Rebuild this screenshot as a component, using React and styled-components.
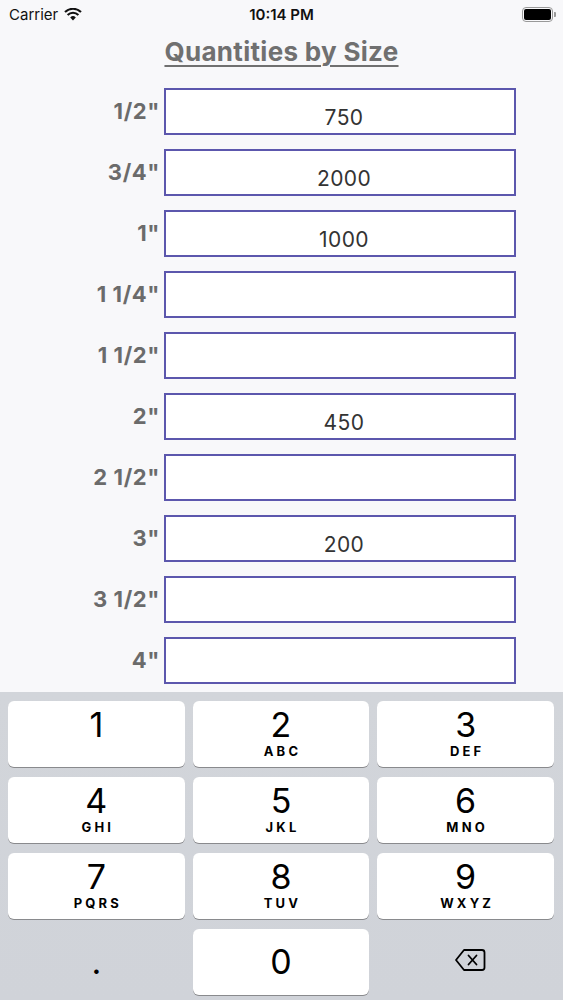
import React from "react";
import styled, { createGlobalStyle } from "styled-components";

const GlobalStyle = createGlobalStyle`
  html, body {
    margin: 0;
    padding: 0;
    background: #f8f8fa;
  }
  body {
    font-family: "Liberation Sans", Arial, sans-serif;
  }
`;

const Screen = styled.div`
  width: 563px;
  height: 1000px;
  display: flex;
  flex-direction: column;
  background: #f8f8fa;
  overflow: hidden;
`;

const StatusBar = styled.div`
  height: 28px;
  display: flex;
  align-items: center;
  justify-content: space-between;
  padding: 0 10px 0 9px;
  font-family: "Inter", "Liberation Sans", sans-serif;
  font-size: 15px;
  color: #111;
  position: relative;
`;

const Carrier = styled.div`
  display: flex;
  align-items: center;
  gap: 6px;
`;

const Clock = styled.div`
  position: absolute;
  left: 0;
  right: 0;
  text-align: center;
  font-weight: 600;
  pointer-events: none;
`;

const Battery = styled.div`
  width: 27px;
  height: 11px;
  border: 1px solid #999;
  border-radius: 4px;
  padding: 1px;
  position: relative;
  margin-top: 1px;

  &::before {
    content: "";
    display: block;
    height: 100%;
    background: #000;
    border-radius: 2px;
  }

  &::after {
    content: "";
    position: absolute;
    right: -4px;
    top: 4px;
    width: 2px;
    height: 5px;
    background: #999;
    border-radius: 0 1px 1px 0;
  }
`;

const Title = styled.h1`
  margin: 8px 0 0;
  height: 36px;
  text-align: center;
  font-family: "Inter", "Liberation Sans", sans-serif;
  font-size: 26px;
  font-weight: 700;
  letter-spacing: 0.3px;
  color: #707070;
  text-decoration: underline;
  text-underline-offset: 4px;
  text-decoration-thickness: 2px;
`;

const Form = styled.div`
  margin-top: 16px;
  display: flex;
  flex-direction: column;
  gap: 14px;
  flex: 1;
`;

const Row = styled.div`
  display: grid;
  grid-template-columns: 160px 352px;
  column-gap: 4px;
  height: 47px;
`;

const SizeLabel = styled.div`
  text-align: right;
  font-family: "Inter", "Liberation Sans", sans-serif;
  font-size: 22px;
  font-weight: 700;
  letter-spacing: 0.6px;
  color: #6b6b6b;
  padding-top: 10px;
`;

const QtyBox = styled.div`
  box-sizing: border-box;
  border: 2px solid #5c57ad;
  background: #fff;
  display: flex;
  align-items: center;
  justify-content: center;
  padding: 12px 0 0 8px;
  font-family: "Inter", "Liberation Sans", sans-serif;
  font-size: 21px;
  letter-spacing: 0.4px;
  color: #333;
`;

const Keyboard = styled.div`
  height: 308px;
  background: linear-gradient(#d2d5da, #d0d3d9);
  box-sizing: border-box;
  padding: 9px 9px 0 8px;
  display: grid;
  grid-template-columns: repeat(3, 1fr);
  grid-auto-rows: 66px;
  column-gap: 8px;
  row-gap: 10px;
`;

const Key = styled.div`
  background: ${(p) => (p.$blank ? "transparent" : "#fff")};
  border-radius: 6px;
  box-shadow: ${(p) => (p.$blank ? "none" : "0 1px 0 #898a8d")};
  display: flex;
  flex-direction: column;
  align-items: center;
  justify-content: ${(p) => (p.$letters ? "flex-start" : "center")};
  padding-top: ${(p) => (p.$letters ? "5px" : "0")};
  box-sizing: border-box;
  color: #000;
  font-family: "Inter", "Liberation Sans", sans-serif;
`;

const Digit = styled.div`
  font-size: 34px;
  line-height: 38px;
  font-weight: 400;
`;

const Letters = styled.div`
  font-size: 13px;
  font-weight: 700;
  letter-spacing: 3.2px;
  margin-left: 3px;
  line-height: 15px;
`;

const rows = [
  ["1/2\"", "750"],
  ["3/4\"", "2000"],
  ["1\"", "1000"],
  ["1 1/4\"", ""],
  ["1 1/2\"", ""],
  ["2\"", "450"],
  ["2 1/2\"", ""],
  ["3\"", "200"],
  ["3 1/2\"", ""],
  ["4\"", ""],
];

const keys = [
  ["1", ""],
  ["2", "ABC"],
  ["3", "DEF"],
  ["4", "GHI"],
  ["5", "JKL"],
  ["6", "MNO"],
  ["7", "PQRS"],
  ["8", "TUV"],
  ["9", "WXYZ"],
];

const Wifi = () => (
  <svg width="18" height="13" viewBox="0 0 18 13">
    <path d="M9 12.5 L6.2 9.4 A4 4 0 0 1 11.8 9.4 Z" fill="#111" />
    <path d="M3.6 6.9 A7.7 7.7 0 0 1 14.4 6.9" stroke="#111" strokeWidth="2.1" fill="none" />
    <path d="M1 4.1 A11.4 11.4 0 0 1 17 4.1" stroke="#111" strokeWidth="2.1" fill="none" />
  </svg>
);

const Backspace = () => (
  <svg width="32" height="24" viewBox="0 0 32 24">
    <path
      d="M10 2 H28 A2.5 2.5 0 0 1 30.5 4.5 V19.5 A2.5 2.5 0 0 1 28 22 H10 L2 12 Z"
      fill="none"
      stroke="#000"
      strokeWidth="1.8"
      strokeLinejoin="round"
    />
    <path d="M14.5 7.5 L22.5 16.5 M22.5 7.5 L14.5 16.5" stroke="#000" strokeWidth="1.8" strokeLinecap="round" />
  </svg>
);

const BackspaceWrap = styled.div`
  margin-left: 8px;
`;

export default function App() {
  return (
    <Screen>
      <GlobalStyle />
      <StatusBar>
        <Carrier>
          Carrier <Wifi />
        </Carrier>
        <Clock>10:14 PM</Clock>
        <Battery />
      </StatusBar>
      <Title>Quantities by Size</Title>
      <Form>
        {rows.map(([size, qty]) => (
          <Row key={size}>
            <SizeLabel>{size}</SizeLabel>
            <QtyBox>{qty}</QtyBox>
          </Row>
        ))}
      </Form>
      <Keyboard>
        {keys.map(([d, l]) => (
          <Key key={d} $letters>
            <Digit>{d}</Digit>
            {l && <Letters>{l}</Letters>}
          </Key>
        ))}
        <Key $blank>
          <Digit>.</Digit>
        </Key>
        <Key>
          <Digit>0</Digit>
        </Key>
        <Key $blank>
          <BackspaceWrap>
            <Backspace />
          </BackspaceWrap>
        </Key>
      </Keyboard>
    </Screen>
  );
}
